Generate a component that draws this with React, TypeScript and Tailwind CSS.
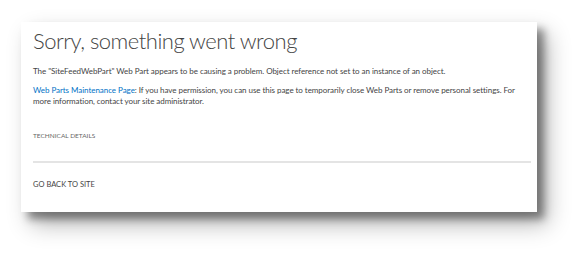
export default function App() {
  return (
    <div className="w-[579px] h-[254px] bg-white overflow-hidden pt-[22px] pl-[21px]" style={{ fontFamily: 'Lato, "Liberation Sans", sans-serif' }}>
      {/* Error card */}
      <div className="w-[516px] h-[190px] bg-white shadow-[7px_7px_8px_rgba(0,0,0,0.4),10px_12px_22px_rgba(0,0,0,0.3)] pl-[12px] pr-[6px] pt-[6px]">
        <h1 className="text-[22px] leading-[26px] font-light text-[#444] tracking-[-0.5px]">Sorry, something went wrong</h1>
        <p className="mt-[11.5px] text-[8px] leading-[11px] text-[#444] tracking-[-0.05px]">
          The "SiteFeedWebPart" Web Part appears to be causing a problem. Object reference not set to an instance of an object.
        </p>
        <p className="mt-[8px] text-[8px] leading-[11px] text-[#444] tracking-[-0.05px] pr-[14px]">
          <span className="text-[#0072c6]">Web Parts Maintenance Page</span>: If you have permission, you can use this page to temporarily close Web Parts or remove personal settings. For more information, contact your site administrator.
        </p>
        <div className="mt-[24.5px] text-[6.5px] leading-[10px] text-[#666] uppercase">Technical Details</div>
        <div className="mt-[19.5px] h-[2px] bg-[#e4e4e4]" />
        <div className="mt-[17.5px] text-[7.5px] leading-[10px] text-[#444] uppercase">Go back to site</div>
      </div>
    </div>
  );
}
